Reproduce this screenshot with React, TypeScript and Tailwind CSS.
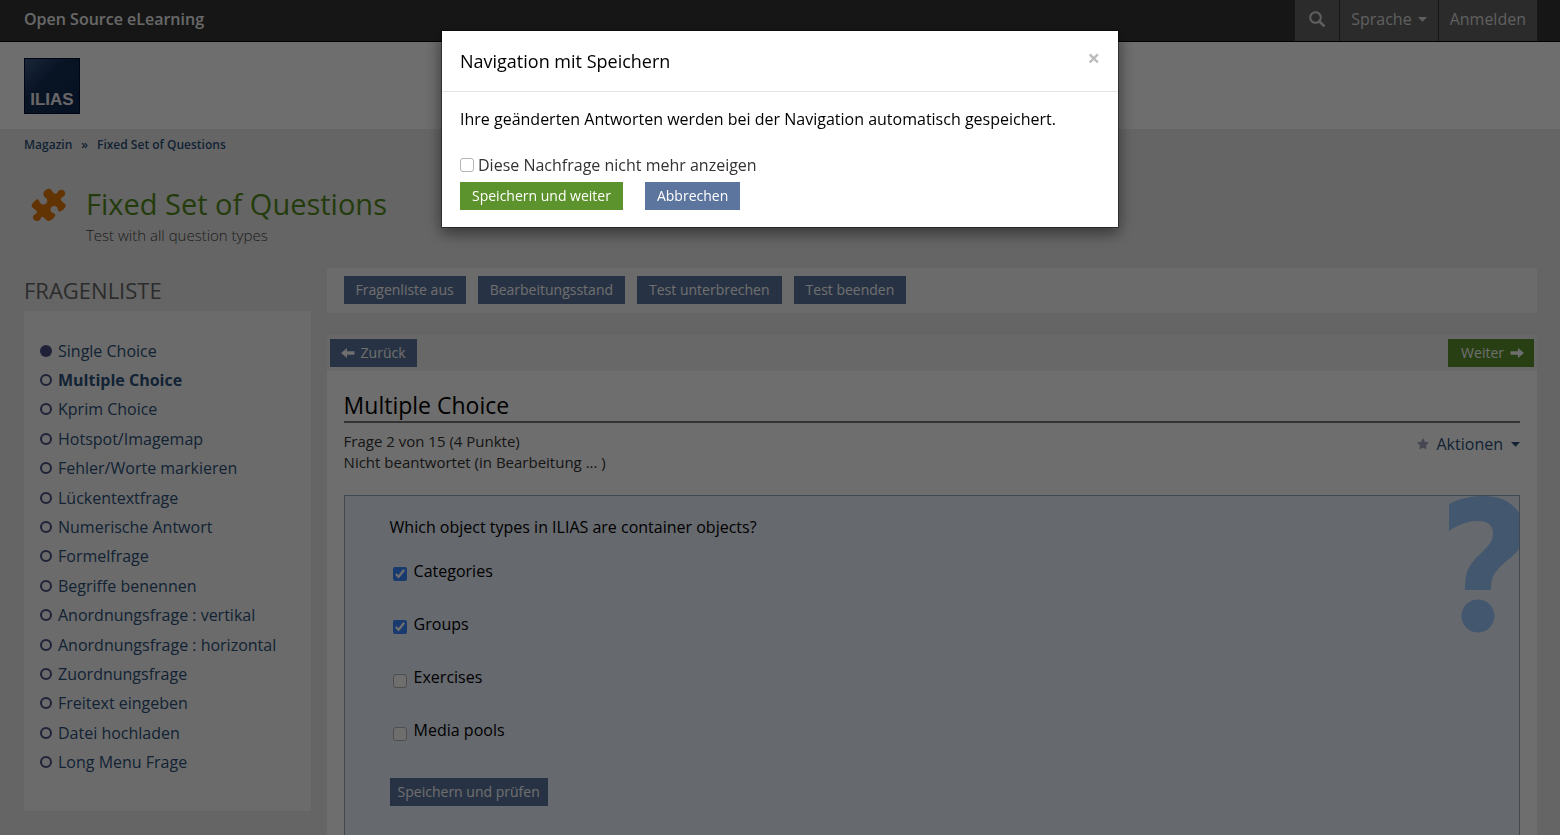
import React from "react";

const questions = [
  "Single Choice",
  "Multiple Choice",
  "Kprim Choice",
  "Hotspot/Imagemap",
  "Fehler/Worte markieren",
  "Lückentextfrage",
  "Numerische Antwort",
  "Formelfrage",
  "Begriffe benennen",
  "Anordnungsfrage : vertikal",
  "Anordnungsfrage : horizontal",
  "Zuordnungsfrage",
  "Freitext eingeben",
  "Datei hochladen",
  "Long Menu Frage",
];

const answers = [
  { id: "categories", label: "Categories", checked: true },
  { id: "groups", label: "Groups", checked: true },
  { id: "exercises", label: "Exercises", checked: false },
  { id: "media-pools", label: "Media pools", checked: false },
];

const toolbar = ["Fragenliste aus", "Bearbeitungsstand", "Test unterbrechen", "Test beenden"];

const button = "inline-flex h-7 items-center text-sm text-white";
const checkbox =
  "size-[14px] shrink-0 appearance-none rounded-[3px] border border-[#b4b4b4] bg-white";

function Caret() {
  return (
    <svg viewBox="0 0 9 5" className="h-[5px] w-[9px]" fill="currentColor" aria-hidden="true">
      <path d="M0 0h9L4.500 4.700z" />
    </svg>
  );
}

function Arrow({ left = false }: { left?: boolean }) {
  return (
    <svg viewBox="0 0 14 12" className="h-3 w-[14px]" fill="currentColor" aria-hidden="true">
      <path d={left ? "M0 6 6 1v3.300h7.500v3.400H6V11z" : "M14 6 8 1v3.300H.5v3.400H8V11z"} />
    </svg>
  );
}

function SearchIcon() {
  return (
    <svg viewBox="0 0 16 16" className="size-4" fill="none" stroke="currentColor" aria-hidden="true">
      <circle cx="6.500" cy="6.500" r="5.300" strokeWidth="2" />
      <path d="m10.500 10.500 4.200 4.200" strokeWidth="2.600" strokeLinecap="round" />
    </svg>
  );
}

function PuzzleIcon() {
  return (
    <svg viewBox="0 0 36 34" className="h-[34px] w-9" fill="#e47607" aria-hidden="true">
      <path d="M12.500 5.500C12.500 3 16 .5 18.500 .8C20.500 1.200 21 3.500 22.500 5C24 6.500 26.500 5.800 26.800 3.800C27.500 1.500 31.500 1 33.300 3C35 5.200 34 8.200 31.800 9C29.500 9.800 29.500 11.500 30.500 13L34.500 16.500C36 18.500 31.500 22.500 29.300 23.600C27.500 24 27 22.500 26.800 21C26.300 18.500 23.500 17.300 21.300 18.500C19 20 19 23 21 24.500C22.500 25.500 24.500 25.600 24.300 27.500C23.700 30 20.500 32 18.300 33C16 33.300 14 30.500 12.500 29.200C11 28 10 29.200 9.600 30.800C8.800 33.200 5 33.800 3 31.800C1 29.500 2 26.800 4.500 26C6.200 25.300 6.400 24.300 5.300 22.800C3.800 20.800 .5 19.500 .5 17.500C1.200 15 4 12.500 6 11.200C8.200 10.800 8 13 9 14.800C10.500 17 13.500 17.200 15.300 15.300C17 13.200 16.300 10.800 14.500 9.600C13 8.800 12.200 7.500 12.500 5.500Z" />
    </svg>
  );
}

function QuestionWatermark() {
  return (
    <svg
      viewBox="0 0 71 137"
      className="absolute top-0 right-0 h-[137px] w-[71px]"
      fill="#9bcaff"
      aria-hidden="true"
    >
      <path d="M1 8C12 2.500 23 0 36 0C52 0 64 6 71 17V53C66 60 60 63 54 69C46 77 43 81 43 94H17C17 77 20 70 30 60C38 52 45 47 45 37C45 29 39 25 30 25C21 25 11 28 1 35Z" />
      <circle cx="30" cy="120" r="16.500" />
    </svg>
  );
}

function SaveDialog() {
  return (
    <div className="fixed inset-0 bg-black/57">
      <div
        role="dialog"
        aria-modal="true"
        aria-labelledby="dialog-title"
        className="mx-auto mt-[30px] w-[678px] border border-black/40 bg-white bg-clip-padding shadow-[0_5px_15px_rgba(0,0,0,0.5)]"
      >
        <div className="flex h-[61px] items-center justify-between border-b border-[#e5e5e5] px-[18px]">
          <h4 id="dialog-title" className="text-lg text-black">
            Navigation mit Speichern
          </h4>
          <button type="button" aria-label="Schließen" className="mb-2 text-[22px] font-bold text-[#bbb]">
            ×
          </button>
        </div>
        <form className="px-[18px] pt-[15px] pb-[17px]">
          <p className="leading-6 text-black">
            Ihre geänderten Antworten werden bei der Navigation automatisch gespeichert.
          </p>
          <label className="mt-[22px] flex items-center gap-1 leading-6 text-[#333]">
            <input type="checkbox" className={checkbox} />
            Diese Nachfrage nicht mehr anzeigen
          </label>
          <div className="mt-[5px] flex gap-[22px]">
            <button type="button" className={`${button} bg-[#5d932c] px-3`}>
              Speichern und weiter
            </button>
            <button type="button" className={`${button} bg-[#5c759e] px-3`}>
              Abbrechen
            </button>
          </div>
        </form>
      </div>
    </div>
  );
}

export default function App() {
  return (
    <div className="flex h-screen flex-col overflow-hidden bg-[#ebebeb] font-['Open_Sans',sans-serif] text-base text-[#333]">
      <header className="shrink-0">
        <div className="flex h-[42px] items-stretch justify-between border-b border-black bg-[#353535] pr-[22px] pl-6">
          <span className="self-center pb-[3px] font-semibold text-[#f0f0f0]">
            Open Source eLearning
          </span>
          <nav className="flex items-stretch divide-x divide-[#363636] border-x border-[#363636] bg-[#646464] text-[#ddd]">
            <button type="button" aria-label="Suche" className="px-[14px] pb-1">
              <SearchIcon />
            </button>
            <button type="button" className="flex items-center gap-[6px] px-[11px] pb-[3px]">
              Sprache <Caret />
            </button>
            <a href="#anmelden" className="flex items-center px-[11px] pb-[3px]">
              Anmelden
            </a>
          </nav>
        </div>
        <div className="flex h-[87px] items-center bg-white px-6 pt-px">
          <div className="flex size-14 items-end justify-center border border-[#000c33] bg-linear-to-br from-[#3a5b85] via-[#142d55] via-40% to-[#0f2850] text-[17px] font-bold text-[#eee]">
            <span className="font-['Liberation_Sans',sans-serif] leading-[26px]">ILIAS</span>
          </div>
        </div>
      </header>

      <main className="pr-[23px] pl-6">
        <nav aria-label="Breadcrumb" className="flex gap-[9px] pt-[7px] text-xs leading-[18px] font-semibold text-[#2c5078]">
          <a href="#magazin">Magazin</a>
          <span>»</span>
          <a href="#test">Fixed Set of Questions</a>
        </nav>

        <div className="mt-[29px] flex gap-[19px] pl-[7px]">
          <div className="pt-[5px]">
            <PuzzleIcon />
          </div>
          <div>
            <h1 className="text-[29px] leading-[42px] text-[#548c1c]">Fixed Set of Questions</h1>
            <p className="text-[15px] leading-5 font-light text-[#444]">Test with all question types</p>
          </div>
        </div>

        <div className="mt-[23px] flex">
          <aside className="w-1/5 pr-4">
            <h2 className="pt-[7px] text-[22px] leading-[31px] text-[#666] uppercase">Fragenliste</h2>
            <ul className="mt-[5px] grid h-[500px] auto-rows-fr bg-[#f8f8f8] px-4 pt-[25px] pb-[34px] text-[#2c5078]">
              {questions.map((question, index) => (
                <li key={question} className="flex items-center">
                  <a
                    href={`#frage-${index + 1}`}
                    className={index === 1 ? "flex items-center gap-[6px] font-bold" : "flex items-center gap-[6px]"}
                  >
                    <span
                      className={
                        index === 0
                          ? "size-3 rounded-full bg-[#484d82]"
                          : "size-3 rounded-full border-2 border-[#484d82]"
                      }
                    />
                    {question}
                  </a>
                </li>
              ))}
            </ul>
          </aside>

          <section className="flex-1">
            <div className="flex gap-3 bg-[#f8f8f8] px-[17px] pt-2 pb-[9px]">
              {toolbar.map((label) => (
                <button key={label} type="button" className={`${button} bg-[#5c759e] px-3`}>
                  {label}
                </button>
              ))}
            </div>

            <div className="mt-[22px] flex justify-between bg-[#f0f0f0] px-[3px] py-1">
              <button type="button" className={`${button} gap-[6px] bg-[#5c759e] px-[11px]`}>
                <Arrow left /> Zurück
              </button>
              <button type="button" className={`${button} gap-[6px] bg-[#5d932c] pr-[10px] pl-[13px]`}>
                Weiter <Arrow />
              </button>
            </div>

            <div className="bg-white px-[17px] pt-[18px]">
              <h2 className="border-b-2 border-[#777] text-[23px] leading-8 text-black">
                Multiple Choice
              </h2>
              <div className="flex justify-between pt-2">
                <p className="text-[15px] leading-[21px]">
                  Frage 2 von 15 (4 Punkte)
                  <br />
                  Nicht beantwortet (in Bearbeitung ... )
                </p>
                <button type="button" className="flex items-center gap-2 self-start pt-px leading-6 text-[#2c5078]">
                  <svg viewBox="0 0 12 12" className="size-3" fill="#a5a5c0" aria-hidden="true">
                    <path d="m6 0 1.900 3.800 4.100.6-3 3 .7 4.200L6 9.800l-3.700 1.800L3 7.400l-3-3 4.100-.6z" />
                  </svg>
                  Aktionen <Caret />
                </button>
              </div>

              <form className="relative mt-[22px] overflow-hidden border border-[#94a9bd] bg-[#ecf3ff] px-[45px] pt-[19px] pb-10 text-black">
                <QuestionWatermark />
                <p className="leading-6">Which object types in ILIAS are container objects?</p>
                <div className="mt-5 flex flex-col gap-[29px] pl-[3px]">
                  {answers.map((answer) => (
                    <div key={answer.id} className="flex gap-[7px] leading-6">
                      <input
                        id={answer.id}
                        type="checkbox"
                        defaultChecked={answer.checked}
                        className={
                          answer.checked ? "mt-2 size-[14px] shrink-0 accent-[#3a88ff]" : `${checkbox} mt-[9px]`
                        }
                      />
                      <label htmlFor={answer.id}>{answer.label}</label>
                    </div>
                  ))}
                </div>
                <button type="button" className={`${button} mt-9 bg-[#5c759e] px-2`}>
                  Speichern und prüfen
                </button>
              </form>
            </div>
          </section>
        </div>
      </main>

      <SaveDialog />
    </div>
  );
}
